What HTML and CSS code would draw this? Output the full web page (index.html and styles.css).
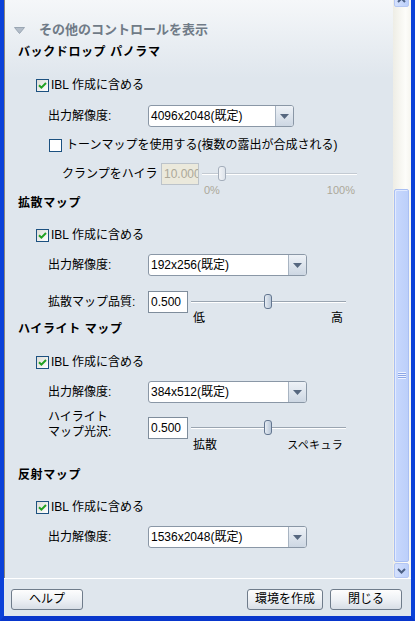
FILE: index.html
```html
<!DOCTYPE html>
<html lang="ja">
<head>
<meta charset="utf-8">
<link rel="stylesheet" href="styles.css">
</head>
<body>
<div class="window">
  <div class="main">
    <div class="panel">
      <div class="toggle">
        <svg class="tri" width="11" height="7" viewBox="0 0 11 7"><polygon points="0.5,0.5 10.5,0.5 5.5,6.5" fill="#b3bdc9" stroke="#9aa6b3" stroke-width="1"/></svg>
        <span>その他のコントロールを表示</span>
      </div>

      <div class="title t1">バックドロップ パノラマ</div>
      <div class="check c1"><span class="cb on"><svg width="11" height="11" viewBox="0 0 11 11"><path d="M2 5.2 L4.4 7.6 L9 3" fill="none" stroke="#21a121" stroke-width="2"/></svg></span><span>IBL 作成に含める</span></div>
      <div class="field s1"><span class="lbl">出力解像度:</span><div class="select narrow"><span class="val">4096x2048(既定)</span><span class="arrow"><svg width="9" height="5" viewBox="0 0 9 5"><polygon points="0,0 9,0 4.5,5" fill="#56677f"/></svg></span></div></div>
      <div class="check c2"><span class="cb"></span><span>トーンマップを使用する(複数の露出が合成される)</span></div>
      <div class="field clamp">
        <span class="lbl">クランプをハイラ</span>
        <div class="num disabled">10.000</div>
        <div class="slider dis">
          <div class="track"><span class="thumb" style="left:16px"></span></div>
          <div class="ticks"><span>0%</span><span>100%</span></div>
        </div>
      </div>

      <div class="title t2">拡散マップ</div>
      <div class="check c3"><span class="cb on"><svg width="11" height="11" viewBox="0 0 11 11"><path d="M2 5.2 L4.4 7.6 L9 3" fill="none" stroke="#21a121" stroke-width="2"/></svg></span><span>IBL 作成に含める</span></div>
      <div class="field s2"><span class="lbl">出力解像度:</span><div class="select"><span class="val">192x256(既定)</span><span class="arrow"><svg width="9" height="5" viewBox="0 0 9 5"><polygon points="0,0 9,0 4.5,5" fill="#56677f"/></svg></span></div></div>
      <div class="field quality">
        <span class="lbl">拡散マップ品質:</span>
        <div class="num">0.500</div>
        <div class="slider">
          <div class="track"><span class="thumb" style="left:73px"></span></div>
          <div class="ticks"><span>低</span><span>高</span></div>
        </div>
      </div>

      <div class="title t3">ハイライト マップ</div>
      <div class="check c4"><span class="cb on"><svg width="11" height="11" viewBox="0 0 11 11"><path d="M2 5.2 L4.4 7.6 L9 3" fill="none" stroke="#21a121" stroke-width="2"/></svg></span><span>IBL 作成に含める</span></div>
      <div class="field s3"><span class="lbl">出力解像度:</span><div class="select"><span class="val">384x512(既定)</span><span class="arrow"><svg width="9" height="5" viewBox="0 0 9 5"><polygon points="0,0 9,0 4.5,5" fill="#56677f"/></svg></span></div></div>
      <div class="field gloss">
        <span class="lbl two">ハイライト<br>マップ光沢:</span>
        <div class="num">0.500</div>
        <div class="slider">
          <div class="track"><span class="thumb" style="left:73px"></span></div>
          <div class="ticks"><span>拡散</span><span class="small">スペキュラ</span></div>
        </div>
      </div>

      <div class="title t4">反射マップ</div>
      <div class="check c5"><span class="cb on"><svg width="11" height="11" viewBox="0 0 11 11"><path d="M2 5.2 L4.4 7.6 L9 3" fill="none" stroke="#21a121" stroke-width="2"/></svg></span><span>IBL 作成に含める</span></div>
      <div class="field s4"><span class="lbl">出力解像度:</span><div class="select"><span class="val">1536x2048(既定)</span><span class="arrow"><svg width="9" height="5" viewBox="0 0 9 5"><polygon points="0,0 9,0 4.5,5" fill="#56677f"/></svg></span></div></div>
    </div>

    <div class="scrollbar">
      <div class="sbtn up"><svg width="9" height="6" viewBox="0 0 9 6"><path d="M1 5 L4.5 1.5 L8 5" fill="none" stroke="#4d6185" stroke-width="2"/></svg></div>
      <div class="sthumb"><span class="grip"></span></div>
      <div class="sbtn down"><svg width="9" height="6" viewBox="0 0 9 6"><path d="M1 1 L4.5 4.5 L8 1" fill="none" stroke="#4d6185" stroke-width="2"/></svg></div>
    </div>
  </div>
  <div class="sep"></div>
  <div class="buttons">
    <button class="btn">ヘルプ</button>
    <span class="spacer"></span>
    <button class="btn wide">環境を作成</button>
    <button class="btn">閉じる</button>
  </div>
</div>
</body>
</html>
```

FILE: styles.css
```css
* { box-sizing: border-box; }
html, body { margin: 0; padding: 0; }
body {
  width: 415px;
  height: 621px;
  overflow: hidden;
  background: #0a3fd6;
  font-family: "Liberation Sans", "Noto Sans CJK JP", sans-serif;
  font-size: 12px;
  line-height: 14px;
  color: #000;
}
.window {
  width: 415px;
  height: 621px;
  display: flex;
  flex-direction: column;
  border-left: 4px solid #0b41d8;
  border-right: 4px solid #0b41d8;
  border-bottom: 5px solid #0836cc;
  background: #dfe6ed;
}
.main {
  height: 578px;
  display: flex;
}
.panel {
  flex: 1;
  border-left: 1px solid #8a867c;
  background: linear-gradient(#f5f7f9 0, #dfe6ed 78px, #dfe6ed 100%);
  display: flex;
  flex-direction: column;
  padding-top: 21px;
  overflow: hidden;
}

/* toggle header */
.toggle {
  height: 18px;
  display: flex;
  align-items: center;
  padding-left: 9px;
  color: #707b87;
  font-weight: bold;
  font-size: 13px;
}
.toggle .tri { margin-right: 14px; }

/* section titles */
.title {
  padding-left: 13px;
  font-weight: bold;
  font-size: 12px;
  letter-spacing: 0.6px;
  display: flex;
  align-items: center;
}
.t1 { height: 16px; margin-top: 5px; }
.t2 { height: 16px; margin-top: 0; }
.t3 { height: 12px; margin-top: 0; }
.t4 { height: 16px; margin-top: 17px; }

/* checkbox rows */
.check {
  height: 18px;
  display: flex;
  align-items: center;
  padding-left: 31px;
}
.cb {
  width: 13px;
  height: 13px;
  border: 1px solid #1c5180;
  background: linear-gradient(135deg, #dcdcd7, #ffffff);
  display: flex;
  align-items: center;
  justify-content: center;
  margin-right: 2px;
}
.c1 { margin-top: 16px; }
.c2 { margin-top: 9px; padding-left: 44px; }
.c2 .cb { margin-right: 4px; background: #fff; }
.c3 { margin-top: 15px; }
.c4 { margin-top: 18px; }
.c5 { margin-top: 15px; }

/* field rows */
.field {
  display: flex;
  align-items: flex-start;
  padding-left: 43px;
}
.lbl {
  width: 100px;
  flex: none;
  height: 22px;
  display: flex;
  align-items: center;
}
.lbl.two {
  height: 23px;
  display: block;
  line-height: 15px;
  margin-top: -7px;
}
.s1 { margin-top: 11px; }
.s2 { margin-top: 10px; }
.s3 { margin-top: 10px; }
.s4 { margin-top: 10px; }

.select {
  width: 159px;
  height: 22px;
  border: 1px solid #8a97a6;
  border-radius: 3px;
  background: #fff;
  display: flex;
  align-items: stretch;
  overflow: hidden;
}
.select.narrow { width: 146px; }
.select .val {
  flex: 1;
  display: flex;
  align-items: center;
  padding-left: 2px;
}
.select .arrow {
  width: 18px;
  border-left: 1px solid #a8b4c2;
  background: linear-gradient(#eef2f7, #cdd7e3);
  display: flex;
  align-items: center;
  justify-content: center;
}

.num {
  width: 40px;
  height: 22px;
  border: 1px solid #7f8d9c;
  background: #fff;
  display: flex;
  align-items: center;
  padding-left: 2px;
  overflow: hidden;
  white-space: nowrap;
  flex: none;
}
.num.disabled {
  width: 38px;
  background: #ebe9dc;
  border-color: #bcc3ca;
  color: #aca899;
}

.clamp { margin-top: 9px; padding-left: 57px; }
.clamp .lbl { width: 99px; letter-spacing: 0; }
.quality { margin-top: 15px; }
.gloss { margin-top: 14px; }

.slider {
  width: 155px;
  margin-left: 3px;
  display: flex;
  flex-direction: column;
}
.track {
  position: relative;
  height: 22px;
}
.track::before {
  content: "";
  position: absolute;
  left: 0;
  right: 0;
  top: 10px;
  height: 1px;
  background: #9aa5b1;
  box-shadow: 0 1px 0 #ffffff;
}
.thumb {
  position: absolute;
  top: 3px;
  width: 8px;
  height: 15px;
  border: 1px solid #637690;
  border-radius: 3px;
  background: linear-gradient(to right, #e6ecf3, #b9c7d8);
}
.gloss .track { height: 23px; }
.ticks {
  height: 10px;
  display: flex;
  justify-content: space-between;
  align-items: center;
  padding: 0 2px 0 2px;
  font-size: 12px;
}
.ticks .small { font-size: 11px; letter-spacing: 0.3px; }
.quality .slider, .gloss .slider { width: 155px; }
.quality .ticks, .gloss .ticks { padding-right: 3px; }

.slider.dis .track::before { background: #c3cad2; }
.slider.dis .thumb { border-color: #a4aebb; background: linear-gradient(to right, #f2f4f7, #dde3ea); }
.slider.dis .ticks { color: #aca899; font-size: 11px; padding-right: 2px; }

/* scrollbar */
.scrollbar {
  width: 18px;
  flex: none;
  background: linear-gradient(to right, #eeede5, #fdfdfa 70%, #f6f5ef);
  display: flex;
  flex-direction: column;
  padding-left: 1px;
  padding-right: 2px;
}
.sbtn {
  height: 15px;
  border: 1px solid #b5c7f3;
  border-radius: 2px;
  background: linear-gradient(to right, #d5e1fd, #bcd0fb);
  display: flex;
  align-items: center;
  justify-content: center;
  flex: none;
}
.sbtn.up { margin-top: -8px; }
.sthumb {
  margin-top: 182px;
  height: 373px;
  border: 1px solid #a9bff3;
  border-radius: 2px;
  background: linear-gradient(to right, #c8d8fd, #bccffa);
  box-shadow: inset 1px 1px 0 #e2eafe;
  display: flex;
  align-items: center;
  justify-content: center;
}
.grip {
  width: 8px;
  height: 7px;
  background: repeating-linear-gradient(#eef3ff 0 1px, #8ca6e6 1px 2px);
}
.sbtn.down { margin-top: 1px; }

/* bottom */
.sep { height: 1px; background: #ffffff; }
.buttons {
  flex: 1;
  display: flex;
  align-items: flex-start;
  padding: 10px 9px 0 7px;
  gap: 7px;
}
.spacer { flex: 1; }
.btn {
  width: 72px;
  height: 21px;
  border: 1px solid #6f7c8b;
  border-radius: 3px;
  background: linear-gradient(#fdfdfd, #eef1f5 50%, #d8dee6);
  font-family: "Liberation Sans", "Noto Sans CJK JP", sans-serif;
  font-size: 12px;
  color: #000;
  padding: 0;
  line-height: 19px;
}
.btn.wide { width: 76px; }
```
